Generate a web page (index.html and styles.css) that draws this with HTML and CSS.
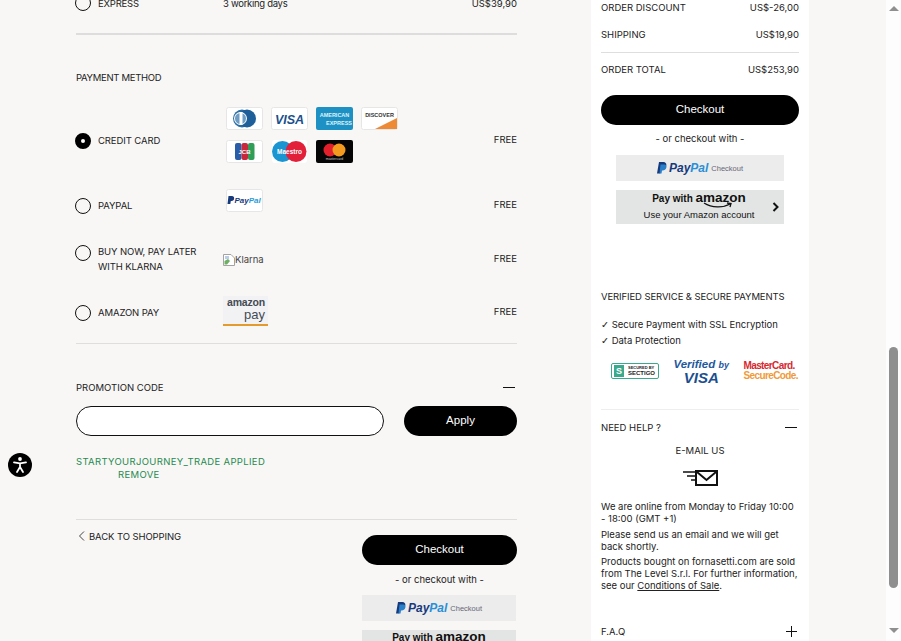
FILE: index.html
```html
<!DOCTYPE html>
<html>
<head>
    <title>Checkout</title>
    <link rel="stylesheet" href="styles.css">
</head>
<body>
    <div id="pagina">
        <div id="contenido">
            <main class="izquierda">
                <div class="envio">
                    <span class="radio"></span>
                    <span class="envio-nombre">EXPRESS</span>
                    <span class="envio-plazo">3 working days</span>
                    <span class="precio">US$39,90</span>
                </div>
                <hr class="linea linea-gruesa">
                <h2 class="titulo-pago">PAYMENT METHOD</h2>

                <div class="pago pago-tarjeta">
                    <span class="radio radio-activo"></span>
                    <span class="pago-nombre">CREDIT CARD</span>
                    <div class="tarjetas">
                        <svg class="tarjeta" viewBox="0 0 37 23"><rect x=".5" y=".5" width="36" height="22" rx="2" fill="#fff" stroke="#e6e6e6"/><circle cx="16" cy="11.500" r="9" fill="#2a6ea6"/><circle cx="21" cy="11.500" r="9" fill="#1f5f99"/><circle cx="14.500" cy="11.500" r="6.500" fill="#fff"/><circle cx="14.500" cy="11.500" r="5.500" fill="#6d9cc4"/><rect x="13.500" y="5" width="3" height="13" fill="#fff"/></svg>
                        <svg class="tarjeta" viewBox="0 0 37 23"><rect x=".5" y=".5" width="36" height="22" rx="2" fill="#fff" stroke="#e6e6e6"/><text x="18.500" y="16.500" text-anchor="middle" class="marca-visa">VISA</text></svg>
                        <svg class="tarjeta" viewBox="0 0 37 23"><rect width="37" height="23" rx="2" fill="#1d91c4"/><text x="18.500" y="10" text-anchor="middle" class="marca-amex">AMERICAN</text><text x="23" y="18" text-anchor="middle" class="marca-amex">EXPRESS</text></svg>
                        <svg class="tarjeta" viewBox="0 0 37 23"><rect x=".5" y=".5" width="36" height="22" rx="2" fill="#fff" stroke="#e6e6e6"/><path d="M14 22 L36 11 V22 Z" fill="#ee8a36"/><text x="18.500" y="10" text-anchor="middle" class="marca-discover">DISCOVER</text></svg>
                        <svg class="tarjeta" viewBox="0 0 37 23"><rect x=".5" y=".5" width="36" height="22" rx="2" fill="#fff" stroke="#e6e6e6"/><rect x="9" y="3" width="6.500" height="17" rx="2" fill="#2a5da8"/><rect x="15.500" y="3" width="6.500" height="17" rx="2" fill="#c8283c"/><rect x="22" y="3" width="6.500" height="17" rx="2" fill="#2f9e58"/><text x="18.500" y="14" text-anchor="middle" class="marca-jcb">JCB</text></svg>
                        <svg class="tarjeta" viewBox="0 0 37 23"><rect x="1" width="35" height="23" rx="3" fill="#fff"/><circle cx="11.500" cy="11.500" r="10.500" fill="#1b94d2"/><circle cx="25" cy="11.500" r="10.500" fill="#e2203a"/><text x="18.500" y="14" text-anchor="middle" class="marca-maestro">Maestro</text></svg>
                        <svg class="tarjeta" viewBox="0 0 37 23"><rect width="37" height="23" rx="2" fill="#050505"/><circle cx="14" cy="10" r="6.500" fill="#e2202c"/><circle cx="23" cy="10" r="6.500" fill="#f39a1f"/><text x="18.500" y="20" text-anchor="middle" class="marca-mc">mastercard</text></svg>
                    </div>
                    <span class="precio">FREE</span>
                </div>

                <div class="pago pago-paypal">
                    <span class="radio"></span>
                    <span class="pago-nombre">PAYPAL</span>
                    <svg class="tarjeta" viewBox="0 0 37 23"><rect x=".5" y=".5" width="36" height="22" rx="2" fill="#fff" stroke="#e6e6e6"/><path d="M2.500 7 H6 C9 7 9 12 5.500 12 H4.800 L4.300 15 H1.500 Z" fill="#173a7c"/><text x="8.500" y="14" class="marca-paypal"><tspan fill="#173a7c">Pay</tspan><tspan fill="#2a9bd8">Pal</tspan></text></svg>
                    <span class="precio">FREE</span>
                </div>

                <div class="pago pago-klarna">
                    <span class="radio"></span>
                    <span class="pago-nombre">BUY NOW, PAY LATER<br>WITH KLARNA</span>
                    <span class="klarna">
                        <svg class="roto" viewBox="0 0 12 12"><path d="M.5 .5 H8 L11.500 4 V11.500 H.5 Z" fill="#fff" stroke="#a3a3a3"/><path d="M1.500 10.500 V7 L5 5 L7 7 L4 10.500 Z" fill="#6fae63"/><path d="M2 2 H6 V5 H2 Z" fill="#b9cdea"/></svg>Klarna
                    </span>
                    <span class="precio">FREE</span>
                </div>

                <div class="pago pago-amazon">
                    <span class="radio"></span>
                    <span class="pago-nombre">AMAZON PAY</span>
                    <span class="amazon-logo">
                        <span class="amazon-uno">amazon</span>
                        <span class="amazon-dos">pay</span>
                    </span>
                    <span class="precio">FREE</span>
                </div>
                <hr class="linea linea-promo">

                <div class="promo-titulo">
                    <span>PROMOTION CODE</span>
                    <span class="menos"></span>
                </div>
                <form class="promo-form">
                    <input type="text" class="promo-input">
                    <button type="button" class="boton boton-apply">Apply</button>
                </form>
                <div class="promo-aplicado">
                    <div>STARTYOURJOURNEY_TRADE APPLIED</div>
                    <div class="promo-quitar">REMOVE</div>
                </div>
                <hr class="linea linea-final">

                <div class="final">
                    <a class="volver">
                        <svg class="flecha" viewBox="0 0 7 10"><path d="M6 .5 L1.500 5 L6 9.500" fill="none" stroke="#444" stroke-width="1"/></svg>
                        BACK TO SHOPPING
                    </a>
                    <div class="final-pago">
                        <button type="button" class="boton">Checkout</button>
                        <p class="o-pagar">- or checkout with -</p>
                        <div class="btn-paypal">
                            <svg class="pp-icono" viewBox="0 0 10 12"><path d="M2 0 H6.500 C10.500 0 10.500 6.500 5.500 6.500 H4 L3.200 11.500 H0 Z" fill="#173a7c"/><path d="M3.500 2.500 H7.500 C11 3 9.500 8.500 6 8.500 H5 L4.500 11.500 H2.500 Z" fill="#2a7fc9"/></svg>
                            <span class="pp-texto"><span class="pp-pay">Pay</span><span class="pp-pal">Pal</span></span>
                            <span class="pp-checkout">Checkout</span>
                        </div>
                        <div class="btn-amazon btn-amazon-corto">
                            <span class="az-linea">Pay with <b>amazon</b></span>
                        </div>
                    </div>
                </div>
            </main>

            <aside class="derecha">
                <div class="resumen-fila resumen-uno"><span>ORDER DISCOUNT</span><span>US$-26,00</span></div>
                <div class="resumen-fila resumen-dos"><span>SHIPPING</span><span>US$19,90</span></div>
                <hr class="linea linea-resumen">
                <div class="resumen-fila resumen-total"><span>ORDER TOTAL</span><span>US$253,90</span></div>
                <button type="button" class="boton boton-resumen">Checkout</button>
                <p class="o-pagar o-pagar-resumen">- or checkout with -</p>
                <div class="pagos-rapidos">
                    <div class="btn-paypal">
                        <svg class="pp-icono" viewBox="0 0 10 12"><path d="M2 0 H6.500 C10.500 0 10.500 6.500 5.500 6.500 H4 L3.200 11.500 H0 Z" fill="#173a7c"/><path d="M3.500 2.500 H7.500 C11 3 9.500 8.500 6 8.500 H5 L4.500 11.500 H2.500 Z" fill="#2a7fc9"/></svg>
                        <span class="pp-texto"><span class="pp-pay">Pay</span><span class="pp-pal">Pal</span></span>
                        <span class="pp-checkout">Checkout</span>
                    </div>
                    <div class="btn-amazon">
                        <div class="az-textos">
                            <span class="az-linea">Pay with <b>amazon</b></span>
                            <svg class="az-sonrisa" viewBox="0 0 30 7"><path d="M1 1 C9 6 20 6 27 2 M24 1 L28 1.500 L27 5" fill="none" stroke="#111" stroke-width="1.300"/></svg>
                            <span class="az-cuenta">Use your Amazon account</span>
                        </div>
                        <svg class="az-flecha" viewBox="0 0 7 10"><path d="M1.500 1 L5.500 5 L1.500 9" fill="none" stroke="#111" stroke-width="2"/></svg>
                    </div>
                </div>

                <h3 class="seguro-titulo">VERIFIED SERVICE &amp; SECURE PAYMENTS</h3>
                <p class="seguro-item"><span class="check">✓</span> Secure Payment with SSL Encryption</p>
                <p class="seguro-item"><span class="check">✓</span> Data Protection</p>
                <div class="sellos">
                    <div class="sectigo">
                        <span class="sectigo-s">S</span>
                        <span class="sectigo-txt"><small>SECURED BY</small>SECTIGO</span>
                    </div>
                    <div class="vbv"><span class="vbv-uno">Verified <i>by</i></span><span class="vbv-dos">VISA</span></div>
                    <div class="mcsc"><span class="mcsc-uno">MasterCard.</span><span class="mcsc-dos">SecureCode.</span></div>
                </div>
                <hr class="linea linea-ayuda">

                <div class="ayuda-titulo">
                    <span>NEED HELP ?</span>
                    <span class="menos"></span>
                </div>
                <div class="email-titulo">E-MAIL US</div>
                <svg class="email-icono" viewBox="0 0 35 16"><path d="M0 2 H12 M4 6 H12 M8 10 H12" stroke="#111" stroke-width="1.300"/><rect x="13" y="1" width="21" height="14" fill="#fff" stroke="#111" stroke-width="2"/><path d="M14 2 L23.500 10 L33 2" fill="none" stroke="#111" stroke-width="2"/></svg>
                <p class="ayuda-texto">We are online from Monday to Friday 10:00 - 18:00 (GMT +1)</p>
                <p class="ayuda-texto">Please send us an email and we will get back shortly.</p>
                <p class="ayuda-texto">Products bought on fornasetti.com are sold from The Level S.r.l. For further information, see our <a class="enlace">Conditions of Sale</a>.</p>
                <div class="faq">
                    <span>F.A.Q</span>
                    <svg class="mas" viewBox="0 0 11 11"><path d="M5.500 0 V11 M0 5.500 H11" stroke="#111" stroke-width="1"/></svg>
                </div>
            </aside>
        </div>

        <div class="scroll">
            <span class="scroll-arriba"></span>
            <span class="scroll-barra"></span>
            <span class="scroll-abajo"></span>
        </div>

        <div id="accesibilidad">
            <svg viewBox="0 0 24 24"><circle cx="12" cy="6" r="1.900" fill="#fff"/><path d="M6 9.300 L12 10.300 L18 9.300 M12 10.300 V14 M12 14 L9 19 M12 14 L15 19" fill="none" stroke="#fff" stroke-width="1.800" stroke-linecap="round" stroke-linejoin="round"/></svg>
        </div>
    </div>
</body>
</html>
```

FILE: styles.css
```css
html, body {
    margin: 0;
    height: 100%;
    overflow: hidden;
}
body {
    font-family: Inter, 'Liberation Sans', sans-serif;
    font-size: 9.5px;
    letter-spacing: 0;
    color: #222222;
    background-color: #f8f7f6;
}
#pagina {
    display: flex;
    height: 641px;
    overflow: hidden;
    position: relative;
}
#contenido {
    flex: 1;
    display: flex;
    align-items: flex-start;
    padding-left: 76px;
}
.izquierda {
    width: 441px;
}
.derecha {
    width: 198px;
    margin-left: 74px;
    padding: 0 10px;
    height: 641px;
    background-color: #ffffff;
}
.linea {
    border: none;
    border-top: 1px solid #dedede;
    margin: 0;
}
.linea-gruesa {
    border-top: 2px solid #dddddd;
    margin-top: 19px;
}
.radio {
    display: block;
    box-sizing: border-box;
    width: 16px;
    height: 16px;
    margin-left: -1px;
    border: 1.3px solid #111111;
    border-radius: 50%;
}
.radio-activo {
    border: 6px solid #000000;
    background-color: #ffffff;
}
.envio {
    display: grid;
    grid-template-columns: 22px 125px 1fr auto;
    align-items: center;
    height: 22px;
    margin-top: -8px;
}
.envio-nombre {
    letter-spacing: -0.2px;
}
.envio-plazo {
    letter-spacing: -0.3px;
}
.precio {
    justify-self: end;
}
.titulo-pago {
    font-size: 9.5px;
    font-weight: 400;
    line-height: 12px;
    letter-spacing: -0.3px;
    margin: 37px 0 0;
}
.pago {
    display: grid;
    grid-template-columns: 22px 125px 1fr auto;
    align-items: center;
}
.pago .precio {
    margin-bottom: 4px;
}
.pago-nombre {
    line-height: 15px;
    letter-spacing: -0.1px;
    margin-bottom: 2px;
}
.pago-tarjeta {
    margin-top: 23px;
    height: 68px;
}
.pago-paypal {
    margin-top: 14px;
    height: 34px;
}
.pago-klarna {
    margin-top: 21px;
    height: 30px;
}
.pago-klarna .radio {
    align-self: start;
    margin-top: 1px;
}
.pago-amazon {
    margin-top: 22px;
    height: 34px;
}
.tarjetas {
    display: grid;
    grid-template-columns: repeat(4, 37px);
    column-gap: 8px;
    row-gap: 10px;
    align-self: start;
    margin-left: 3px;
}
.tarjeta {
    display: block;
    width: 37px;
    height: 23px;
}
.pago-paypal .tarjeta {
    align-self: start;
    margin-left: 3px;
}
.marca-visa {
    font: italic bold 12.5px 'Liberation Sans', sans-serif;
    fill: #1a4f8c;
}
.marca-amex {
    font: bold 5.500px 'Liberation Sans', sans-serif;
    fill: #dff2fa;
}
.marca-discover {
    font: bold 5.500px 'Liberation Sans', sans-serif;
    fill: #333333;
}
.marca-jcb {
    font: bold 6px 'Liberation Sans', sans-serif;
    fill: #ffffff;
}
.marca-maestro {
    font: bold 6.500px 'Liberation Sans', sans-serif;
    fill: #ffffff;
}
.marca-mc {
    font: 3.500px 'Liberation Sans', sans-serif;
    fill: #cccccc;
}
.marca-paypal {
    font: italic bold 8px 'Liberation Sans', sans-serif;
}
.klarna {
    display: flex;
    align-items: center;
    font-size: 9.5px;
    color: #444444;
    margin-bottom: 2px;
}
.roto {
    width: 12px;
    height: 12px;
    margin-top: 2px;
}
.amazon-logo {
    display: flex;
    flex-direction: column;
    align-items: flex-end;
    box-sizing: border-box;
    align-self: start;
    width: 45px;
    height: 30px;
    padding-right: 3px;
    background-color: #f2f2f4;
    border-bottom: 2px solid #e39a2e;
    font-family: 'Liberation Sans', sans-serif;
    color: #444b55;
}
.amazon-uno {
    font-size: 10.5px;
    font-weight: bold;
    line-height: 12px;
    letter-spacing: -0.2px;
}
.amazon-dos {
    font-size: 13px;
    line-height: 14px;
}
.linea-promo {
    margin-top: 13px;
}
.promo-titulo {
    display: flex;
    justify-content: space-between;
    align-items: center;
    margin-top: 37px;
    height: 12px;
}
.menos {
    display: block;
    width: 12px;
    height: 1px;
    background-color: #111111;
    margin-right: 2px;
}
.promo-form {
    display: flex;
    justify-content: space-between;
    margin-top: 13px;
}
.promo-input {
    box-sizing: border-box;
    width: 308px;
    height: 30px;
    border: 1.5px solid #111111;
    border-radius: 15px;
    background-color: #ffffff;
    padding: 0 12px;
}
.boton {
    display: block;
    width: 100%;
    height: 30px;
    border: none;
    border-radius: 15px;
    background-color: #000000;
    color: #ffffff;
    font-family: 'Liberation Sans', sans-serif;
    font-size: 11.5px;
    padding-bottom: 4px;
}
.boton-apply {
    width: 113px;
}
.promo-aplicado {
    color: #258a4f;
    line-height: 13px;
    letter-spacing: 0.33px;
    margin-top: 19px;
}
.promo-quitar {
    padding-left: 42px;
}
.linea-final {
    margin-top: 38px;
}
.final {
    display: flex;
    justify-content: space-between;
    margin-top: 10px;
}
.volver {
    display: flex;
    align-items: center;
    gap: 4px;
    align-self: flex-start;
    height: 12px;
    padding-left: 2px;
    letter-spacing: -0.1px;
}
.flecha {
    width: 7px;
    height: 10px;
}
.final-pago {
    width: 155px;
    margin-top: 5px;
}
.o-pagar {
    text-align: center;
    line-height: 12px;
    margin: 9px 0 9px;
}
.o-pagar-resumen {
    margin: 8px 0 10px;
}
.btn-paypal {
    display: flex;
    align-items: center;
    justify-content: center;
    height: 26px;
    background-color: #ececec;
    font-family: 'Liberation Sans', sans-serif;
}
.final-pago .btn-paypal {
    width: 154px;
}
.pp-icono {
    width: 10px;
    height: 12px;
    margin-right: 2px;
}
.pp-texto {
    font-size: 12px;
    font-weight: bold;
    font-style: italic;
    margin-right: 3px;
}
.pp-pay {
    color: #173a7c;
}
.pp-pal {
    color: #2a8fd6;
}
.pp-checkout {
    font-size: 7.5px;
    color: #667;
}
.btn-amazon {
    display: flex;
    align-items: center;
    justify-content: center;
    position: relative;
    height: 34px;
    margin-top: 9px;
    background-color: #e3e5e4;
    font-family: 'Liberation Sans', sans-serif;
    color: #111111;
}
.btn-amazon-corto {
    align-items: flex-start;
    width: 154px;
}
.az-textos {
    display: flex;
    flex-direction: column;
    align-items: center;
    margin: 0 2px 2px 0;
}
.az-linea {
    font-size: 10px;
    font-weight: bold;
    line-height: 13px;
}
.az-linea b {
    font-size: 13.5px;
}
.az-sonrisa {
    width: 30px;
    height: 7px;
    margin: -3px 0 -1px 38px;
}
.az-cuenta {
    font-size: 9.5px;
    line-height: 13px;
}
.az-flecha {
    position: absolute;
    right: 5px;
    top: 12px;
    width: 7px;
    height: 10px;
}
.resumen-fila {
    display: flex;
    justify-content: space-between;
    line-height: 12px;
}
.resumen-uno {
    margin-top: 2px;
}
.resumen-dos {
    margin-top: 15px;
}
.linea-resumen {
    margin-top: 11px;
}
.resumen-total {
    margin-top: 11px;
}
.boton-resumen {
    margin-top: 19px;
}
.pagos-rapidos {
    padding: 0 15px;
}
.seguro-titulo {
    font-size: 9.5px;
    font-weight: 400;
    line-height: 12px;
    letter-spacing: -0.1px;
    margin: 67px 0 0;
}
.seguro-item {
    line-height: 16px;
    margin: 0;
}
.seguro-titulo + .seguro-item {
    margin-top: 14px;
}
.check {
    font-family: 'DejaVu Sans', sans-serif;
    font-weight: bold;
}
.sellos {
    display: flex;
    align-items: center;
    justify-content: space-between;
    height: 24px;
    margin-top: 10px;
    padding: 0 1px 0 10px;
    font-family: 'Liberation Sans', sans-serif;
}
.sectigo {
    display: flex;
    align-items: center;
    gap: 4px;
    box-sizing: border-box;
    width: 48px;
    height: 16px;
    padding: 0 2px;
    border: 1px solid #3aa98c;
    border-radius: 2px;
}
.sectigo-s {
    width: 10px;
    height: 12px;
    background-color: #3aa98c;
    color: #ffffff;
    font-size: 9px;
    font-weight: bold;
    line-height: 12px;
    text-align: center;
}
.sectigo-txt {
    display: flex;
    flex-direction: column;
    font-size: 6px;
    font-weight: bold;
    line-height: 6.500px;
}
.sectigo-txt small {
    font-size: 4px;
    line-height: 5px;
}
.vbv {
    display: flex;
    flex-direction: column;
    align-items: center;
    font-style: italic;
    font-weight: bold;
    color: #24589e;
}
.vbv-uno {
    font-size: 11.500px;
    line-height: 11px;
    white-space: nowrap;
}
.vbv-uno i {
    font-size: 9px;
}
.vbv-dos {
    font-size: 15px;
    line-height: 13px;
    color: #1d4f8f;
}
.mcsc {
    display: flex;
    flex-direction: column;
    font-size: 10px;
    font-weight: bold;
    line-height: 10px;
    letter-spacing: -0.6px;
}
.mcsc-uno {
    color: #d7282f;
}
.mcsc-dos {
    color: #ef9a3a;
}
.linea-ayuda {
    margin-top: 26px;
    border-top-color: #eeeeee;
}
.ayuda-titulo {
    display: flex;
    justify-content: space-between;
    align-items: center;
    height: 12px;
    margin-top: 11px;
}
.email-titulo {
    text-align: center;
    line-height: 12px;
    margin-top: 12px;
}
.email-icono {
    display: block;
    width: 35px;
    height: 16px;
    margin: 13px auto 0;
}
.ayuda-texto {
    line-height: 12px;
    margin: 0 0 3.5px;
}
.email-icono + .ayuda-texto {
    margin-top: 15px;
}
.enlace {
    text-decoration: underline;
}
.faq {
    display: flex;
    justify-content: space-between;
    align-items: center;
    margin-top: 34px;
    padding-right: 2px;
}
.mas {
    width: 11px;
    height: 11px;
}
.scroll {
    display: flex;
    flex-direction: column;
    align-items: center;
    flex: none;
    width: 15px;
    background-color: #fdfdfd;
}
.scroll-arriba, .scroll-abajo {
    width: 0;
    height: 0;
    border-left: 5px solid transparent;
    border-right: 5px solid transparent;
}
.scroll-arriba {
    margin-top: 6px;
    border-bottom: 5px solid #8f8f8f;
}
.scroll-barra {
    width: 9px;
    height: 241px;
    margin-top: 336px;
    border-radius: 5px;
    background-color: #8f8f8f;
}
.scroll-abajo {
    margin-top: 40px;
    border-top: 5px solid #8f8f8f;
}
#accesibilidad {
    position: absolute;
    left: 8px;
    top: 453px;
    width: 24px;
    height: 24px;
    border-radius: 50%;
    background-color: #000000;
}
```
